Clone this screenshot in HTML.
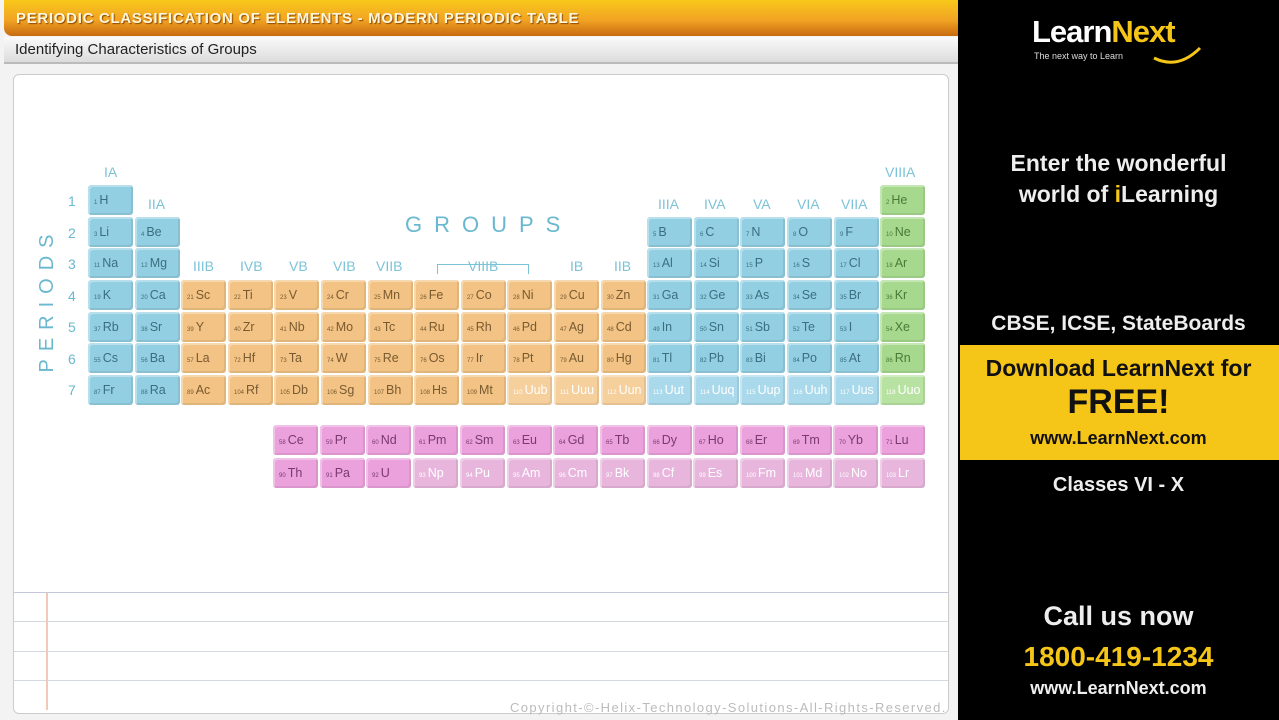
<!DOCTYPE html>
<html><head><meta charset="utf-8"><style>
*{margin:0;padding:0;box-sizing:border-box}
body{width:1279px;height:720px;overflow:hidden;background:#e8e8e8;font-family:"Liberation Sans",sans-serif;position:relative}
.a{position:absolute}
.c{position:absolute;width:45px;height:30px;border-radius:3px;font-size:12.5px;color:#3a6f80;padding-left:6px;line-height:30px;white-space:nowrap;box-shadow:inset -2px -2px 0 rgba(0,0,0,.07),inset 2px 2px 0 rgba(255,255,255,.35)}
.c small{font-size:6px;margin-right:2px}
.b{background:#93cfe2}.o{background:#f2c384;color:#7a5a30}.g{background:#a6d98e;color:#4b7a38}
.p{background:#eaa1dc;color:#7a3a70}.q{background:#e8b6dd;color:#fff}.bl{background:#a9d9ea;color:#fff}.ol{background:#f5cf9c;color:#fff}.gl{background:#b8e2a2;color:#fff}
.lbl{position:absolute;color:#7cc3d8;font-size:14px}
.rt{position:absolute;left:958px;width:321px;text-align:center;color:#eee;font-weight:bold}
</style></head><body>
<div class="a" style="left:0;top:0;width:958px;height:720px;background:#f3f3f3"></div>
<div class="a" style="left:4px;top:0;width:954px;height:36px;background:linear-gradient(#f8c81a 0%,#f2a424 55%,#c86a10 100%);border-radius:0 0 0 8px"></div>
<div class="a" style="left:16px;top:10px;color:#fff6dc;font-size:15px;font-weight:bold;letter-spacing:0.7px;text-shadow:1px 1px 1px #8a4a00">PERIODIC CLASSIFICATION OF ELEMENTS - MODERN PERIODIC TABLE</div>
<div class="a" style="left:4px;top:37px;width:954px;height:27px;background:linear-gradient(#fafafa,#dcdcdc);border-bottom:2px solid #bbb"></div>
<div class="a" style="left:15px;top:41px;color:#222;font-size:15px">Identifying Characteristics of Groups</div>
<div class="a" style="left:13px;top:74px;width:936px;height:640px;background:#fff;border:1px solid #ccc;border-radius:6px"></div>
<div class="a" style="left:14px;top:592px;width:934px;height:1px;background:#c4c8d8"></div>
<div class="a" style="left:14px;top:621px;width:934px;height:1px;background:#d4d8e0"></div>
<div class="a" style="left:14px;top:651px;width:934px;height:1px;background:#d4d8e0"></div>
<div class="a" style="left:14px;top:680px;width:934px;height:1px;background:#d4d8e0"></div>
<div class="a" style="left:46px;top:593px;width:2px;height:117px;background:#f2c8b8"></div>
<div class="a" style="left:510px;top:700px;font-size:13px;letter-spacing:1.4px;color:#bbb;white-space:nowrap">Copyright-©-Helix-Technology-Solutions-All-Rights-Reserved.</div>

<div class="lbl" style="left:104px;top:164px">IA</div>
<div class="lbl" style="left:148px;top:196px">IIA</div>
<div class="lbl" style="left:885px;top:164px">VIIIA</div>
<div class="lbl" style="left:193px;top:258px">IIIB</div><div class="lbl" style="left:240px;top:258px">IVB</div><div class="lbl" style="left:289px;top:258px">VB</div><div class="lbl" style="left:333px;top:258px">VIB</div><div class="lbl" style="left:376px;top:258px">VIIB</div><div class="lbl" style="left:468px;top:258px">VIIIB</div><div class="lbl" style="left:570px;top:258px">IB</div><div class="lbl" style="left:614px;top:258px">IIB</div>
<div class="a" style="left:437px;top:264px;width:92px;height:10px;border:1px solid #7cc3d8;border-bottom:none"></div>
<div class="lbl" style="left:658px;top:196px">IIIA</div><div class="lbl" style="left:704px;top:196px">IVA</div><div class="lbl" style="left:753px;top:196px">VA</div><div class="lbl" style="left:797px;top:196px">VIA</div><div class="lbl" style="left:841px;top:196px">VIIA</div>
<div class="lbl" style="left:405px;top:212px;font-size:22px;letter-spacing:12px;color:#6ab8cf">GROUPS</div>
<div class="lbl" style="left:-45px;top:288px;font-size:20px;letter-spacing:8px;color:#6ab8cf;transform:rotate(-90deg);width:185px;text-align:center">PERIODS</div>
<div class="lbl" style="left:68px;top:186px;line-height:31.5px;color:#6ab8cf">1<br>2<br>3<br>4<br>5<br>6<br>7</div>

<div class="c b" style="left:88px;top:185px"><small>1</small>H</div>
<div class="c g" style="left:880px;top:185px"><small>2</small>He</div>
<div class="c b" style="left:88px;top:217px"><small>3</small>Li</div><div class="c b" style="left:135px;top:217px"><small>4</small>Be</div>
<div class="c b" style="left:647px;top:217px"><small>5</small>B</div><div class="c b" style="left:694px;top:217px"><small>6</small>C</div><div class="c b" style="left:740px;top:217px"><small>7</small>N</div><div class="c b" style="left:787px;top:217px"><small>8</small>O</div><div class="c b" style="left:834px;top:217px"><small>9</small>F</div><div class="c g" style="left:880px;top:217px"><small>10</small>Ne</div>
<div class="c b" style="left:88px;top:248px"><small>11</small>Na</div><div class="c b" style="left:135px;top:248px"><small>12</small>Mg</div>
<div class="c b" style="left:647px;top:248px"><small>13</small>Al</div><div class="c b" style="left:694px;top:248px"><small>14</small>Si</div><div class="c b" style="left:740px;top:248px"><small>15</small>P</div><div class="c b" style="left:787px;top:248px"><small>16</small>S</div><div class="c b" style="left:834px;top:248px"><small>17</small>Cl</div><div class="c g" style="left:880px;top:248px"><small>18</small>Ar</div>

<div class="c b" style="left:88px;top:280px"><small>19</small>K</div><div class="c b" style="left:135px;top:280px"><small>20</small>Ca</div><div class="c o" style="left:181px;top:280px"><small>21</small>Sc</div><div class="c o" style="left:228px;top:280px"><small>22</small>Ti</div><div class="c o" style="left:274px;top:280px"><small>23</small>V</div><div class="c o" style="left:321px;top:280px"><small>24</small>Cr</div><div class="c o" style="left:368px;top:280px"><small>25</small>Mn</div><div class="c o" style="left:414px;top:280px"><small>26</small>Fe</div><div class="c o" style="left:461px;top:280px"><small>27</small>Co</div><div class="c o" style="left:507px;top:280px"><small>28</small>Ni</div><div class="c o" style="left:554px;top:280px"><small>29</small>Cu</div><div class="c o" style="left:601px;top:280px"><small>30</small>Zn</div><div class="c b" style="left:647px;top:280px"><small>31</small>Ga</div><div class="c b" style="left:694px;top:280px"><small>32</small>Ge</div><div class="c b" style="left:740px;top:280px"><small>33</small>As</div><div class="c b" style="left:787px;top:280px"><small>34</small>Se</div><div class="c b" style="left:834px;top:280px"><small>35</small>Br</div><div class="c g" style="left:880px;top:280px"><small>36</small>Kr</div>

<div class="c b" style="left:88px;top:312px"><small>37</small>Rb</div><div class="c b" style="left:135px;top:312px"><small>38</small>Sr</div><div class="c o" style="left:181px;top:312px"><small>39</small>Y</div><div class="c o" style="left:228px;top:312px"><small>40</small>Zr</div><div class="c o" style="left:274px;top:312px"><small>41</small>Nb</div><div class="c o" style="left:321px;top:312px"><small>42</small>Mo</div><div class="c o" style="left:368px;top:312px"><small>43</small>Tc</div><div class="c o" style="left:414px;top:312px"><small>44</small>Ru</div><div class="c o" style="left:461px;top:312px"><small>45</small>Rh</div><div class="c o" style="left:507px;top:312px"><small>46</small>Pd</div><div class="c o" style="left:554px;top:312px"><small>47</small>Ag</div><div class="c o" style="left:601px;top:312px"><small>48</small>Cd</div><div class="c b" style="left:647px;top:312px"><small>49</small>In</div><div class="c b" style="left:694px;top:312px"><small>50</small>Sn</div><div class="c b" style="left:740px;top:312px"><small>51</small>Sb</div><div class="c b" style="left:787px;top:312px"><small>52</small>Te</div><div class="c b" style="left:834px;top:312px"><small>53</small>I</div><div class="c g" style="left:880px;top:312px"><small>54</small>Xe</div>

<div class="c b" style="left:88px;top:343px"><small>55</small>Cs</div><div class="c b" style="left:135px;top:343px"><small>56</small>Ba</div><div class="c o" style="left:181px;top:343px"><small>57</small>La</div><div class="c o" style="left:228px;top:343px"><small>72</small>Hf</div><div class="c o" style="left:274px;top:343px"><small>73</small>Ta</div><div class="c o" style="left:321px;top:343px"><small>74</small>W</div><div class="c o" style="left:368px;top:343px"><small>75</small>Re</div><div class="c o" style="left:414px;top:343px"><small>76</small>Os</div><div class="c o" style="left:461px;top:343px"><small>77</small>Ir</div><div class="c o" style="left:507px;top:343px"><small>78</small>Pt</div><div class="c o" style="left:554px;top:343px"><small>79</small>Au</div><div class="c o" style="left:601px;top:343px"><small>80</small>Hg</div><div class="c b" style="left:647px;top:343px"><small>81</small>Tl</div><div class="c b" style="left:694px;top:343px"><small>82</small>Pb</div><div class="c b" style="left:740px;top:343px"><small>83</small>Bi</div><div class="c b" style="left:787px;top:343px"><small>84</small>Po</div><div class="c b" style="left:834px;top:343px"><small>85</small>At</div><div class="c g" style="left:880px;top:343px"><small>86</small>Rn</div>

<div class="c b" style="left:88px;top:375px"><small>87</small>Fr</div><div class="c b" style="left:135px;top:375px"><small>88</small>Ra</div><div class="c o" style="left:181px;top:375px"><small>89</small>Ac</div><div class="c o" style="left:228px;top:375px"><small>104</small>Rf</div><div class="c o" style="left:274px;top:375px"><small>105</small>Db</div><div class="c o" style="left:321px;top:375px"><small>106</small>Sg</div><div class="c o" style="left:368px;top:375px"><small>107</small>Bh</div><div class="c o" style="left:414px;top:375px"><small>108</small>Hs</div><div class="c o" style="left:461px;top:375px"><small>109</small>Mt</div><div class="c ol" style="left:507px;top:375px"><small>110</small>Uub</div><div class="c ol" style="left:554px;top:375px"><small>111</small>Uuu</div><div class="c ol" style="left:601px;top:375px"><small>112</small>Uun</div><div class="c bl" style="left:647px;top:375px"><small>113</small>Uut</div><div class="c bl" style="left:694px;top:375px"><small>114</small>Uuq</div><div class="c bl" style="left:740px;top:375px"><small>115</small>Uup</div><div class="c bl" style="left:787px;top:375px"><small>116</small>Uuh</div><div class="c bl" style="left:834px;top:375px"><small>117</small>Uus</div><div class="c gl" style="left:880px;top:375px"><small>118</small>Uuo</div>

<div class="c p" style="left:273px;top:425px"><small>58</small>Ce</div><div class="c p" style="left:320px;top:425px"><small>59</small>Pr</div><div class="c p" style="left:366px;top:425px"><small>60</small>Nd</div><div class="c p" style="left:413px;top:425px"><small>61</small>Pm</div><div class="c p" style="left:460px;top:425px"><small>62</small>Sm</div><div class="c p" style="left:507px;top:425px"><small>63</small>Eu</div><div class="c p" style="left:553px;top:425px"><small>64</small>Gd</div><div class="c p" style="left:600px;top:425px"><small>65</small>Tb</div><div class="c p" style="left:647px;top:425px"><small>66</small>Dy</div><div class="c p" style="left:693px;top:425px"><small>67</small>Ho</div><div class="c p" style="left:740px;top:425px"><small>68</small>Er</div><div class="c p" style="left:787px;top:425px"><small>69</small>Tm</div><div class="c p" style="left:833px;top:425px"><small>70</small>Yb</div><div class="c p" style="left:880px;top:425px"><small>71</small>Lu</div>
<div class="c p" style="left:273px;top:458px"><small>90</small>Th</div><div class="c p" style="left:320px;top:458px"><small>91</small>Pa</div><div class="c p" style="left:366px;top:458px"><small>92</small>U</div><div class="c q" style="left:413px;top:458px"><small>93</small>Np</div><div class="c q" style="left:460px;top:458px"><small>94</small>Pu</div><div class="c q" style="left:507px;top:458px"><small>95</small>Am</div><div class="c q" style="left:553px;top:458px"><small>96</small>Cm</div><div class="c q" style="left:600px;top:458px"><small>97</small>Bk</div><div class="c q" style="left:647px;top:458px"><small>98</small>Cf</div><div class="c q" style="left:693px;top:458px"><small>99</small>Es</div><div class="c q" style="left:740px;top:458px"><small>100</small>Fm</div><div class="c q" style="left:787px;top:458px"><small>101</small>Md</div><div class="c q" style="left:833px;top:458px"><small>102</small>No</div><div class="c q" style="left:880px;top:458px"><small>103</small>Lr</div>

<div class="a" style="left:958px;top:0;width:321px;height:720px;background:#000"></div>
<div class="a" style="left:1032px;top:14px;font-size:31px;font-weight:bold;color:#fff;letter-spacing:-1px">Learn<span style="color:#f5c518">Next</span></div>
<div class="a" style="left:1034px;top:51px;font-size:9px;color:#ddd">The next way to Learn</div>
<svg class="a" style="left:1150px;top:40px" width="56" height="26"><path d="M4 18 Q28 30 50 8" stroke="#f5c518" stroke-width="3" fill="none"/></svg>
<div class="rt" style="top:148px;font-size:23px;line-height:31px">Enter the wonderful<br>world of <span style="color:#f5c518">i</span>Learning</div>
<div class="rt" style="top:312px;font-size:21px">CBSE, ICSE, StateBoards</div>
<div class="a" style="left:960px;top:345px;width:319px;height:115px;background:#f5c518"></div>
<div class="rt" style="top:355px;font-size:23px;color:#111">Download LearnNext for</div>
<div class="rt" style="top:383px;font-size:34px;color:#111">FREE!</div>
<div class="rt" style="top:428px;font-size:18px;color:#111">www.LearnNext.com</div>
<div class="rt" style="top:474px;font-size:20px">Classes VI - X</div>
<div class="rt" style="top:601px;font-size:27px">Call us now</div>
<div class="rt" style="top:641px;font-size:28px;color:#f5c518">1800-419-1234</div>
<div class="rt" style="top:678px;font-size:18px">www.LearnNext.com</div>
</body></html>
